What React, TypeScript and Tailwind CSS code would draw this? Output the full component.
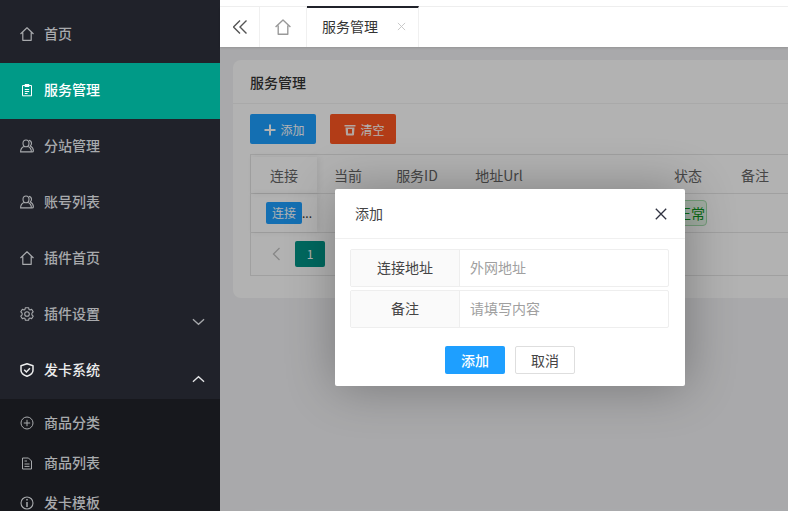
import React from "react";

type IconProps = { className?: string };
const Home = ({ className = "" }: IconProps) => (
  <svg viewBox="0 0 14 14" className={className} fill="none" stroke="currentColor" strokeWidth="1.200">
    <path d="M.500 7 7 .800 13.500 7M2.800 5.600v7.700h8.400V5.600" strokeLinejoin="round" />
  </svg>
);
const Clip = ({ className = "" }: IconProps) => (
  <svg viewBox="0 0 14 14" className={className} fill="none" stroke="currentColor" strokeWidth="1">
    <path d="M2.500 2.500h9v10.300h-9zM5 1.500h4v2H5zM4.800 6.500h4.400M4.800 8.500h4.400M4.800 10.500h2.800" />
  </svg>
);
const User = ({ className = "" }: IconProps) => (
  <svg viewBox="0 0 14 14" className={className} fill="none" stroke="currentColor" strokeWidth="1.100">
    <path d="M6 1c1.900 0 3 1.400 3 3.200S7.800 7.800 6 7.800 3 6 3 4.200 4.100 1 6 1Z" />
    <path d="M3.800 7.400C2 8.200.600 9.700.600 12.900h10.800c0-3.200-1.400-4.700-3.200-5.500" />
    <path d="M9 1.200c1.700.5 2.500 1.700 2.500 3 0 1.100-.5 2-1.200 2.700 1.700.8 3.100 2.600 3.100 5 0 .5-.5 1-1.500 1" />
  </svg>
);
const Gear = ({ className = "" }: IconProps) => (
  <svg viewBox="0 0 14 14" className={className} fill="none" stroke="currentColor" strokeWidth="1.100">
    <circle cx="7" cy="7" r="2.300" />
    <path d="M5.400.700h3.200l.4 1.700 1 .5 1.600-.7 1.600 2.700-1.300 1.200v1.800l1.300 1.200-1.600 2.700-1.600-.7-1 .5-.4 1.700H5.400L5 11.600l-1-.5-1.600.7L.8 9.100l1.300-1.200V6.100L.8 4.900l1.600-2.700 1.600.7 1-.5z" strokeLinejoin="round" />
  </svg>
);
const Shield = ({ className = "" }: IconProps) => (
  <svg viewBox="0 0 14 14" className={className} fill="none" stroke="currentColor" strokeWidth="1.500">
    <path d="M7 .800 13 2.700v4.600c0 3-2.700 4.900-6 5.900-3.300-1-6-2.900-6-5.900V2.700z" strokeLinejoin="round" />
    <path d="m4.200 6.800 2.200 2.200 3.500-3.800" />
  </svg>
);
const PlusCircle = ({ className = "" }: IconProps) => (
  <svg viewBox="0 0 14 14" className={className} fill="none" stroke="currentColor" strokeWidth="1">
    <circle cx="7" cy="7" r="6" />
    <path d="M7 3.800v6.400M3.800 7h6.400" />
  </svg>
);
const Doc = ({ className = "" }: IconProps) => (
  <svg viewBox="0 0 14 14" className={className} fill="none" stroke="currentColor" strokeWidth="1">
    <path d="M2.500 2h6l3 3v8h-9zM4.500 8h5M4.500 10.400h5M4.500 5h2.500" />
  </svg>
);
const Info = ({ className = "" }: IconProps) => (
  <svg viewBox="0 0 14 14" className={className} fill="none" stroke="currentColor" strokeWidth="1.100">
    <circle cx="7" cy="7" r="6" />
    <path d="M7 3v1.500M7 6v5" strokeWidth="1.500" />
  </svg>
);
const Chevron = ({ up = false }: { up?: boolean }) => (
  <svg viewBox="0 0 14 8" className={`w-[13px] h-[8px] ${up ? "text-[#e4e5e7]" : "text-[#a6a8ab]"}`} fill="none" stroke="currentColor" strokeWidth="1.400">
    <path d={up ? "M1 7 7 1.500 13 7" : "M1 1l6 5.500L13 1"} />
  </svg>
);

function NavItem({ icon, label, active, open, chevron }: { icon: React.ReactNode; label: string; active?: boolean; open?: boolean; chevron?: "up" | "down" }) {
  return (
    <div className={`h-14 flex items-center pl-5 pr-[15px] shrink-0 ${active ? "bg-[#009a87] text-white" : open ? "text-[#eceded]" : "text-[#a8aaad]"}`}>
      <span className="w-[14px] h-[14px] flex mb-0.5">{icon}</span>
      <span className="ml-[10px] flex-1 text-sm font-medium leading-none mb-1">{label}</span>
      {chevron && <span className={`flex ${chevron === "up" ? "mt-[16px]" : "mt-[14px]"}`}><Chevron up={chevron === "up"} /></span>}
    </div>
  );
}
function SubItem({ icon, label }: { icon: React.ReactNode; label: string }) {
  return (
    <div className="h-10 flex items-center pl-5 shrink-0 text-[#a8aaad]">
      <span className="w-[14px] h-[14px] flex">{icon}</span>
      <span className="ml-[10px] text-sm font-medium leading-none mb-0.5">{label}</span>
    </div>
  );
}

const cols = "grid grid-cols-[66px_62px_76px_88px_105px_80px_54px_1fr]";

export default function App() {
  return (
    <div className="w-[788px] h-[511px] overflow-hidden flex bg-white text-[#333]" style={{ fontFamily: '"Noto Sans CJK SC", "Noto Sans", sans-serif' }}>
      <aside className="w-[220px] shrink-0 h-full flex flex-col bg-[#20222a] pt-[7px] overflow-hidden">
        <NavItem icon={<Home className="w-full h-full" />} label="首页" />
        <NavItem active icon={<Clip className="w-full h-full" />} label="服务管理" />
        <NavItem icon={<User className="w-full h-full" />} label="分站管理" />
        <NavItem icon={<User className="w-full h-full" />} label="账号列表" />
        <NavItem icon={<Home className="w-full h-full" />} label="插件首页" />
        <NavItem icon={<Gear className="w-full h-full" />} label="插件设置" chevron="down" />
        <NavItem open icon={<Shield className="w-full h-full" />} label="发卡系统" chevron="up" />
        <div className="flex-1 bg-[#17181d] pt-1 flex flex-col">
          <SubItem icon={<PlusCircle className="w-full h-full" />} label="商品分类" />
          <SubItem icon={<Doc className="w-full h-full" />} label="商品列表" />
          <SubItem icon={<Info className="w-full h-full" />} label="发卡模板" />
        </div>
      </aside>

      <main className="flex-1 min-w-0 flex flex-col">
        <div className="h-[7px] shrink-0 bg-white border-b border-[#f0f0f0]" />
        <div className="relative z-10 h-10 shrink-0 flex bg-white text-sm shadow-[0_1px_2px_rgba(0,0,0,0.12)]">
          <div className="w-10 flex items-center justify-center border-r border-[#f0f0f0] text-[#555]">
            <svg viewBox="1 1 14 14" className="w-[14px] h-[14px]" fill="none" stroke="currentColor" strokeWidth="1.400"><path d="M8 1.500 1.500 8 8 14.500M14.500 1.500 8 8l6.500 6.500" /></svg>
          </div>
          <div className="w-[47px] flex items-center justify-center border-r border-[#f0f0f0] text-[#999]">
            <Home className="w-4 h-4" />
          </div>
          <div className="w-[112px] flex items-center pl-[15px] border-t-2 border-t-[#20222a] border-r border-r-[#f0f0f0] -mt-px text-[#333]">
            <span className="leading-none mb-1">服务管理</span>
            <svg viewBox="0 0 10 10" className="w-[9px] h-[9px] ml-[19px] text-[#c4c4c4] mb-0.5" fill="none" stroke="currentColor" strokeWidth="1"><path d="M1 1l8 8M9 1l-8 8" /></svg>
          </div>
        </div>

        <div className="relative flex-1 bg-[#f2f3f5] overflow-hidden px-[13px] pt-[13px]">
          <div className="w-[600px] h-[238px] bg-white rounded-lg">
            <div className="h-[44px] flex items-center px-[17px] text-sm font-medium border-b border-[#f2f2f2]">服务管理</div>
            <div className="pl-[17px] pt-[10px]">
              <div className="flex gap-[14px]">
                <button className="w-[66px] h-[30px] rounded-[2px] bg-[#1e9fff] text-white text-xs flex items-center justify-center gap-1 pl-[3px] pt-0.5">
                  <svg viewBox="0 0 12 12" className="w-3 h-3" fill="none" stroke="currentColor" strokeWidth="2"><path d="M6 .500v11M.500 6h11" /></svg>
                  添加
                </button>
                <button className="w-[66px] h-[30px] rounded-[2px] bg-[#ff5722] text-white text-xs flex items-center justify-center gap-1 pl-[3px] pt-0.5">
                  <svg viewBox="0 0 12 12" className="w-3 h-3 opacity-90" fill="currentColor"><path d="M.500 1h11v1.500H.500zM1.500 3.500h9l-.5 7a1 1 0 0 1-1 1H3a1 1 0 0 1-1-1z" /><path d="M4 5h4v4.500H4z" fill="#ff5722" /></svg>
                  清空
                </button>
              </div>
              <div className="mt-[10px] border border-[#e6e6e6] text-sm text-[#666]">
                <div className={`${cols} h-[39px] items-center text-center border-b border-[#e6e6e6] pt-0.5`}>
                  <div className="h-full flex items-center justify-center shadow-[2px_0_6px_rgba(0,0,0,0.08)]">连接</div>
                  <div>当前</div>
                  <div>服务ID</div>
                  <div>地址Url</div>
                  <div />
                  <div>状态</div>
                  <div>备注</div>
                  <div />
                </div>
                <div className={`${cols} h-[39px] items-center border-b border-[#e6e6e6]`}>
                  <div className="h-full flex items-center pl-[15px] shadow-[2px_0_6px_rgba(0,0,0,0.08)] text-[#333] whitespace-nowrap">
                    <span className="w-9 h-[22px] shrink-0 rounded-[2px] bg-[#1e9fff] text-white text-xs flex items-center justify-center">连接</span>
                    <span className="text-xs">...</span>
                  </div>
                  <div /><div /><div /><div />
                  <div className="flex justify-center">
                    <span className="w-[38px] h-[26px] rounded-[4px] bg-[#e8f8ea] border border-[#a5dfae] text-[#0c9a20] text-sm flex items-center justify-end pr-px">正常</span>
                  </div>
                  <div /><div />
                </div>
                <div className="h-[42px] flex items-center pl-[21px]">
                  <svg viewBox="0 0 8 14" className="w-[9px] h-[14px] text-[#c2c2c2]" fill="none" stroke="currentColor" strokeWidth="1.300"><path d="M7 1 1 7l6 6" /></svg>
                  <span className="ml-[14px] w-[30px] h-[26px] rounded-[2px] bg-[#009688] text-white text-xs flex items-center justify-center">1</span>
                </div>
              </div>
            </div>
          </div>

          <div className="absolute inset-0 bg-black/30" />

          <div className="absolute left-[115px] top-[142px] w-[350px] h-[197px] bg-white rounded-[2px] shadow-[1px_1px_50px_rgba(0,0,0,0.3)] flex flex-col">
            <div className="h-[50px] shrink-0 flex items-center justify-between pl-5 pr-[18px] border-b border-[#f0f0f0] text-sm text-[#444]">
              <span className="mb-0.5">添加</span>
              <svg viewBox="0 0 12 12" className="w-3 h-3 text-[#2f3240]" fill="none" stroke="currentColor" strokeWidth="1.300"><path d="M.800.800l10.400 10.400M11.200.800.800 11.200" /></svg>
            </div>
            <div className="pl-[15px] pr-4 pt-[10px] flex flex-col gap-[3px] text-sm">
              {[["连接地址", "外网地址"], ["备注", "请填写内容"]].map(([label, ph]) => (
                <div key={label} className="h-[38px] flex border border-[#eee] rounded-[2px]">
                  <div className="w-[109px] shrink-0 bg-[#fafafa] border-r border-[#eee] flex items-center justify-center text-[#444] pb-0.5">{label}</div>
                  <div className="flex-1 flex items-center pl-[10px] text-[#a0a0a0] pb-0.5">{ph}</div>
                </div>
              ))}
            </div>
            <div className="flex justify-end gap-[10px] pr-[110px] mt-[18px] text-sm">
              <button className="w-[60px] h-7 rounded-[2px] bg-[#1e9fff] text-white font-medium">添加</button>
              <button className="w-[60px] h-7 rounded-[2px] bg-white border border-[#dedede] text-[#444]">取消</button>
            </div>
          </div>
        </div>
      </main>
    </div>
  );
}
